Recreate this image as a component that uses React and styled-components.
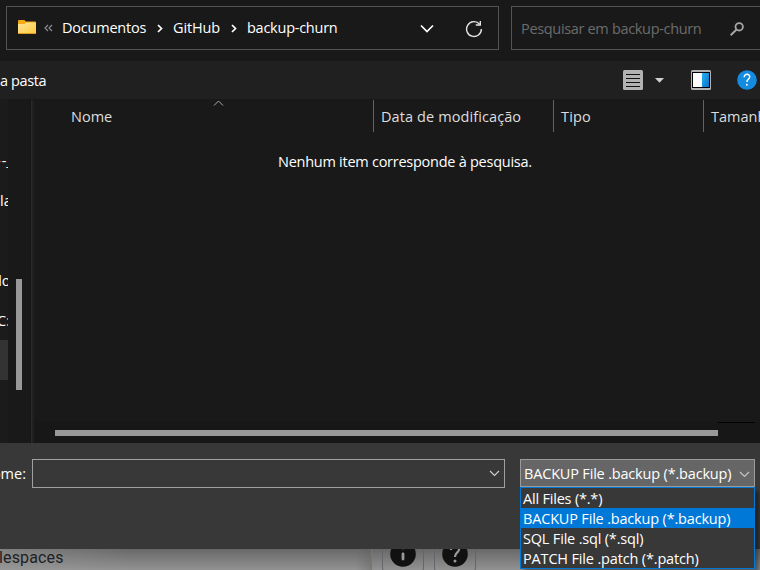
import React from "react";
import styled, { createGlobalStyle } from "styled-components";

const Global = createGlobalStyle`
  * { box-sizing: border-box; }
  html, body { margin: 0; background: #191919; overflow: hidden; }
  body { font-family: "Open Sans", "Noto Sans", sans-serif; font-size: 14.5px; color: #fff; }
  svg { display: block; flex: none; }
`;

const Window = styled.div`
  position: relative;
  width: 760px;
  height: 570px;
  overflow: hidden;
  display: flex;
  flex-direction: column;
  background: #191919;
`;

const Text = styled.span`
  flex: none;
  white-space: pre;
  line-height: 20px;
  letter-spacing: ${(p) => p.$track || 0}px;
  color: ${(p) => p.$color || "#fff"};
`;

const AddressRow = styled.header`
  flex: none;
  display: flex;
  gap: 12px;
  height: 61px;
  padding: 6px 0 0 6px;
`;

const AddressBox = styled.div`
  flex: none;
  display: flex;
  align-items: center;
  width: 493px;
  height: 44px;
  padding: 0 15px 0 10px;
  border: 1px solid #535353;
`;

const Crumbs = styled.nav`
  flex: 1;
  display: flex;
  align-items: center;
`;

const Crumb = styled.div`
  flex: none;
  width: ${(p) => p.$width}px;
  display: flex;
  padding-bottom: 1px;
`;

const CrumbArrow = styled.div`
  flex: none;
  width: ${(p) => p.$width}px;
  display: flex;
  justify-content: center;
`;

const AddressActions = styled.div`
  display: flex;
  align-items: center;
  gap: 31px;
  padding-top: 1px;
`;

const SearchBox = styled.div`
  flex: none;
  display: flex;
  align-items: center;
  justify-content: space-between;
  width: 270px;
  height: 44px;
  padding: 2px 36px 0 9px;
  border: 1px solid #535353;
`;

const Toolbar = styled.div`
  flex: none;
  display: flex;
  align-items: center;
  justify-content: space-between;
  height: 38px;
  padding: 0 3px 0 0;
  background: #202020;
`;

const ToolbarLabel = styled.div`
  display: flex;
  padding-top: 2px;
`;

const ToolbarIcons = styled.div`
  display: flex;
  align-items: center;
`;

const IconSlot = styled.div`
  margin-left: ${(p) => p.$gap || 0}px;
`;

const Body = styled.main`
  flex: none;
  display: flex;
  height: 344px;
`;

const Sidebar = styled.aside`
  flex: none;
  display: flex;
  width: 30px;
  height: 344px;
  background: #191919;
`;

const Tree = styled.div`
  flex: none;
  width: 8px;
  padding-top: 41px;
  overflow: hidden;
  background: #1b1b1b;
`;

const TreeRow = styled.div`
  display: flex;
  align-items: center;
  height: 40px;
  padding: 2px 0 0 ${(p) => p.$indent || 0}px;
  background: ${(p) => (p.$selected ? "#333" : "transparent")};
  border-radius: 0 1px 1px 0;
`;

const TreeLabel = styled(Text)`
  margin-left: ${(p) => p.$shift || 0}px;
`;

const SideTrack = styled.div`
  width: 22px;
  padding: 180px 0 0 8px;
`;

const SideThumb = styled.div`
  width: 6px;
  height: 111px;
  background: #989898;
`;

const Splitter = styled.div`
  flex: none;
  width: 4px;
  margin-top: 1px;
  border-left: 1px solid #131313;
  background: linear-gradient(90deg, #2b2b2b 1px, #202020 1px);
`;

const FileList = styled.section`
  flex: none;
  display: flex;
  flex-direction: column;
  width: 726px;
`;

const Columns = styled.div`
  flex: none;
  display: flex;
  height: 33px;
  padding: 1px 0 0;
`;

const Column = styled.div`
  flex: none;
  display: flex;
  align-items: center;
  width: ${(p) => p.$width}px;
  padding: 2px 0 0 ${(p) => p.$pad}px;
  border-right: 1px solid #636363;
`;

const SortMark = styled.div`
  align-self: flex-start;
  margin: -2px 0 0 101px;
`;

const Empty = styled.div`
  flex: 1;
  padding: 20px 0 0 244px;
`;

const ScrollTrack = styled.div`
  flex: none;
  display: flex;
  height: 21px;
  padding: 8px 0 0 21px;
  background: #171717;
`;

const ScrollThumb = styled.div`
  width: 663px;
  height: 6px;
  background: #989898;
`;

const ScrollCap = styled.div`
  width: 37px;
  height: 1px;
  margin-top: -8px;
  background: #000;
`;

const Footer = styled.footer`
  flex: none;
  display: flex;
  height: 106px;
  padding-top: 16px;
  background: #383838;
`;

const NameLabel = styled.label`
  flex: none;
  display: flex;
  justify-content: flex-end;
  width: 32px;
  padding: 5px 6px 0 0;
`;

const NameField = styled.div`
  flex: none;
  display: flex;
  align-items: center;
  justify-content: flex-end;
  width: 473px;
  height: 29px;
  padding-right: 4px;
  border: 1px solid #a0a0a0;
`;

const TypeSelect = styled.div`
  flex: none;
  display: flex;
  align-items: center;
  justify-content: space-between;
  width: 235px;
  height: 28px;
  margin-left: 15px;
  padding: 2px 4px 0 3px;
  border: 1px solid #9b9b9b;
  background: #666;
`;

const Menu = styled.div`
  position: absolute;
  left: 520px;
  top: 487px;
  width: 235px;
  height: 82px;
  border: 1px solid #0078d7;
  background: #383838;
  box-shadow: 4px 4px 4px rgba(0, 0, 0, 0.4);
`;

const Option = styled.div`
  display: flex;
  align-items: center;
  height: 20px;
  padding: 2px 0 0 2px;
  background: ${(p) => (p.$active ? "#0078d7" : "transparent")};
`;

const Behind = styled.div`
  flex: none;
  display: flex;
  height: 21px;
  background: linear-gradient(#686868, #929292);
`;

const BehindLeft = styled.div`
  flex: none;
  width: 371px;
  height: 21px;
  overflow: hidden;
  background: linear-gradient(90deg, #9b9b9b80, transparent 130px, transparent 355px, #5d5d5d60);
`;

const BehindText = styled.div`
  margin-left: -1px;
  white-space: pre;
  font: 16px/18px Roboto, sans-serif;
  letter-spacing: 0.15px;
  color: #202124;
`;

const BehindTools = styled.div`
  display: flex;
  gap: 10px;
  padding-left: 10px;
  border-left: 1px solid #777;
`;

const ToolButton = styled.div`
  width: 42px;
  height: 30px;
  margin-top: -7px;
  padding: 0 7px;
  border: 1px solid #62666b;
  border-top: 0;
  border-radius: 0 0 4px 4px;
  clip-path: inset(7px 0 0 0);
`;

const Folder = () => (
  <svg width="18" height="15" viewBox="0 0 18 15">
    <defs>
      <linearGradient id="folder" x1="0" y1="0" x2="1" y2="1">
        <stop offset="0" stopColor="#ffe69b" />
        <stop offset="1" stopColor="#ffc83b" />
      </linearGradient>
    </defs>
    <path d="M0 1q0-1 1-1h5.500l1.200 1.600H17q1 0 1 1V13H0Z" fill="#f5aa13" />
    <path d="M0 4h6.500L8 2.500H18v10.700q0 .8-.8.8H.8Q0 14 0 13.200Z" fill="url(#folder)" />
    <path d="M0 13.500h18" stroke="#dc9c1b" />
  </svg>
);

const FolderSlot = styled.div`
  margin: -2px -1px 0 1px;
`;

const Line = ({ w, h, d, color = "#fff", stroke = 1.5 }) => (
  <svg width={w} height={h} viewBox={`0 0 ${w} ${h}`} fill="none" stroke={color} strokeWidth={stroke}>
    <path d={d} />
  </svg>
);

const Refresh = () => (
  <svg width="18" height="18" viewBox="0 0 18 18" fill="none" stroke="#e4e4e4" strokeWidth="1.400">
    <path d="M14.600 4.200A7.400 7.400 0 1 0 16.400 9" />
    <path d="M15.300 1v4h-4.500" />
  </svg>
);

const Magnifier = () => (
  <svg width="14" height="14" viewBox="0 0 14 14" fill="none" stroke="#a6a6a6">
    <circle cx="9.200" cy="4.800" r="3.700" strokeWidth="1.800" />
    <path d="M6.500 7.500.7 13.200" strokeWidth="2" />
  </svg>
);

const ListIcon = () => (
  <svg width="20" height="20" viewBox="0 0 20 20">
    <rect width="20" height="20" rx="1.500" fill="#b2b2b2" />
    <path d="M3 4.500h14M3 8.500h14M3 12.500h14M3 16.500h14" stroke="#111" />
  </svg>
);

const PaneIcon = () => (
  <svg width="20" height="20" viewBox="0 0 20 20">
    <defs>
      <linearGradient id="pane" x1="0" y1="0" x2="1" y2="1">
        <stop offset="0" stopColor="#2bb1ef" />
        <stop offset="1" stopColor="#0871cd" />
      </linearGradient>
    </defs>
    <rect width="20" height="20" rx="1.500" fill="#b2b2b2" />
    <rect x="1" y="2" width="18" height="16" fill="#000" />
    <rect x="2" y="3" width="9" height="14" fill="#fff" />
    <rect x="11" y="3" width="7" height="14" fill="url(#pane)" />
  </svg>
);

const HelpIcon = () => (
  <svg width="20" height="20" viewBox="0 0 20 20" fill="none">
    <circle cx="10" cy="10" r="9.800" fill="#158be0" />
    <path d="M7.200 7.200c0-4 5.800-3.700 5.500-.2-.2 2.300-2.800 2.200-2.800 5" stroke="#fff" strokeWidth="1.500" />
    <circle cx="9.900" cy="14.800" r="1" fill="#fff" />
  </svg>
);

const Disc = ({ children }) => (
  <svg width="26" height="26" viewBox="0 0 26 26" fill="none">
    <circle cx="13" cy="12" r="12.800" fill="#111" />
    {children}
  </svg>
);

export default function App() {
  return (
    <>
      <Global />
      <Window>
        <AddressRow>
          <AddressBox>
            <Crumbs>
              <FolderSlot><Folder /></FolderSlot>
              <CrumbArrow $width={27}>
                <Line w={9} h={8} d="M4 1 1 4l3 3M8 1 5 4l3 3" color="#929292" stroke={1.1} />
              </CrumbArrow>
              <Crumb $width={84}><Text $track={-0.22}>Documentos</Text></Crumb>
              <CrumbArrow $width={27}><Line w={6} h={9} d="M1 1l3.500 3.500L1 8" stroke={1.7} /></CrumbArrow>
              <Crumb $width={47}><Text $track={-0.15}>GitHub</Text></Crumb>
              <CrumbArrow $width={27}><Line w={6} h={9} d="M1 1l3.500 3.500L1 8" stroke={1.7} /></CrumbArrow>
              <Crumb $width={91}><Text $track={-0.25}>backup-churn</Text></Crumb>
            </Crumbs>
            <AddressActions>
              <Line w={14} h={9} d="M1 1.500l6 6 6-6" stroke={1.7} />
              <Refresh />
            </AddressActions>
          </AddressBox>
          <SearchBox>
            <Text $color="#6c6c6c" $track={-0.33}>Pesquisar em backup-churn</Text>
            <Magnifier />
          </SearchBox>
        </AddressRow>

        <Toolbar>
          <ToolbarLabel><Text $track={-0.4}>a pasta</Text></ToolbarLabel>
          <ToolbarIcons>
            <ListIcon />
            <IconSlot $gap={12}>
              <svg width="9" height="5" viewBox="0 0 9 5"><path d="M0 0h9L4.500 4.800Z" fill="#d0d0d0" /></svg>
            </IconSlot>
            <IconSlot $gap={27}><PaneIcon /></IconSlot>
            <IconSlot $gap={26}><HelpIcon /></IconSlot>
          </ToolbarIcons>
        </Toolbar>

        <Body>
          <Sidebar>
            <Tree>
              <TreeRow><TreeLabel $color="#c8401c" $shift={-3}>-</TreeLabel><Text>-_</Text></TreeRow>
              <TreeRow><Text>la</Text></TreeRow>
              <TreeRow />
              <TreeRow><TreeLabel $shift={-7}>do</TreeLabel></TreeRow>
              <TreeRow><TreeLabel $shift={-3}>C:</TreeLabel></TreeRow>
              <TreeRow $selected />
            </Tree>
            <SideTrack><SideThumb /></SideTrack>
          </Sidebar>
          <Splitter />
          <FileList>
            <Columns>
              <Column $width={340} $pad={37}>
                <Text $color="#dedede">Nome</Text>
                <SortMark><Line w={11} h={6} d="M1 5.500l4.500-4.500L10 5.500" color="#aaa" stroke={1} /></SortMark>
              </Column>
              <Column $width={180} $pad={7}><Text $color="#dedede" $track={0.1}>Data de modificação</Text></Column>
              <Column $width={150} $pad={7}><Text $color="#dedede" $track={0.15}>Tipo</Text></Column>
              <Column $width={90} $pad={7}><Text $color="#dedede">Tamanho</Text></Column>
            </Columns>
            <Empty><Text $track={-0.26}>Nenhum item corresponde à pesquisa.</Text></Empty>
            <ScrollTrack><ScrollThumb /><ScrollCap /></ScrollTrack>
          </FileList>
        </Body>

        <Footer>
          <NameLabel><Text>Nome:</Text></NameLabel>
          <NameField><Line w={11} h={7} d="M1 1l4.500 4.500L10 1" color="#d0d0d0" stroke={1.1} /></NameField>
          <TypeSelect>
            <Text $track={-0.18}>BACKUP File .backup (*.backup)</Text>
            <Line w={11} h={7} d="M1 1l4.500 4.500L10 1" color="#c8c8c8" stroke={1.1} />
          </TypeSelect>
        </Footer>

        <Behind>
          <BehindLeft><BehindText>lespaces</BehindText></BehindLeft>
          <BehindTools>
            <ToolButton>
              <Disc>
                <circle cx="13" cy="5.500" r="1.800" fill="#999" />
                <path d="M13 12v5" stroke="#999" strokeWidth="2.800" strokeLinecap="round" />
              </Disc>
            </ToolButton>
            <ToolButton>
              <Disc>
                <path d="M9 8c0-5 8-4.500 8-.5 0 3-4 3-4 7.500" stroke="#999" strokeWidth="2.200" />
                <circle cx="13" cy="19" r="1.500" fill="#999" />
              </Disc>
            </ToolButton>
          </BehindTools>
        </Behind>

        <Menu>
          <Option><Text $track={-0.2}>All Files (*.*)</Text></Option>
          <Option $active><Text $track={-0.18}>BACKUP File .backup (*.backup)</Text></Option>
          <Option><Text $track={-0.18}>SQL File .sql (*.sql)</Text></Option>
          <Option><Text $track={-0.16}>PATCH File .patch (*.patch)</Text></Option>
        </Menu>
      </Window>
    </>
  );
}
